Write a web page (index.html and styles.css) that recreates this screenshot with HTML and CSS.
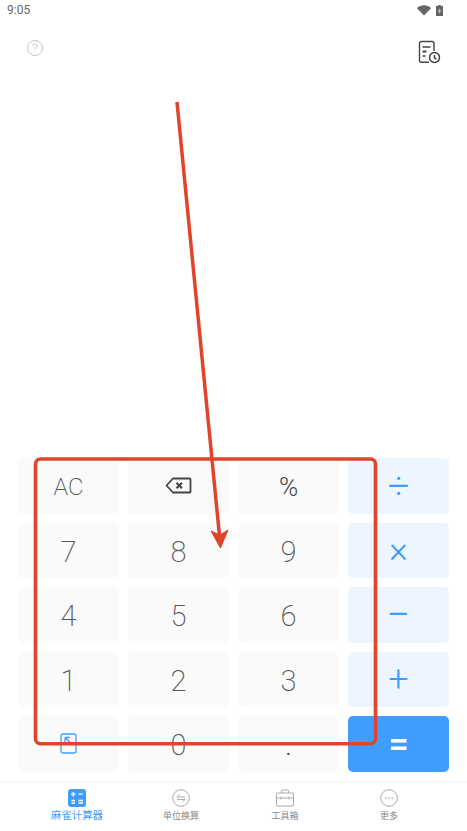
FILE: index.html
```html
<!DOCTYPE html>
<html lang="zh-CN">
<head>
    <meta charset="UTF-8">
    <meta name="viewport" content="width=device-width, initial-scale=1.0">
    <title>麻雀计算器</title>
    <link rel="stylesheet" href="styles.css">
</head>
<body>
    <div class="status-bar">
        <span class="clock">9:05</span>
        <div class="status-icons">
            <svg width="14" height="11" viewBox="0 0 14 11"><path d="M0 3.2C3.8-.6 10.2-.6 14 3.2L7 10.6z" fill="#666"/></svg>
            <svg width="7" height="11" viewBox="0 0 7 11"><path d="M2.2 0h2.6v1H7v10H0V1h2.2z" fill="#666"/><path d="M3.8 3 2 6.4h1.3L2.9 9 5 5.5H3.6z" fill="#ddd"/></svg>
        </div>
    </div>

    <header class="top-bar">
        <svg class="help-icon" width="18" height="18" viewBox="0 0 18 18" fill="none" stroke="#c4c4c4">
            <circle cx="9" cy="9" r="7.500"/>
            <path d="M6.800 7.200C6.800 5.900 7.800 5 9 5s2.200.9 2.200 2.100c0 1.600-2.200 1.700-2.200 3.500"/>
            <path d="M9 12.300v1"/>
        </svg>
        <svg class="history-icon" width="24" height="24" viewBox="0 0 24 24" fill="none" stroke="#444" stroke-width="1.400">
            <path d="M12 22.300H4.500Q2.500 22.300 2.500 20.300V3.500Q2.500 1.500 4.500 1.500H15Q17 1.500 17 3.500V11"/>
            <path d="M5.500 7h8M5.500 16h3"/>
            <path d="M5.500 11.500h4" stroke-width="2"/>
            <circle cx="17.500" cy="17.500" r="5" stroke-width="1.500"/>
            <path d="M17.500 15v3l1.800 1" stroke-width="1.500"/>
        </svg>
    </header>

    <main class="display"></main>

    <section class="keypad">
        <button class="key key-small">AC</button>
        <button class="key key-icon">
            <svg width="27" height="17" viewBox="0 0 27 17" fill="none" stroke="#444" stroke-width="1.800" stroke-linejoin="round">
                <path d="M8 1.500H24.500Q25.500 1.500 25.500 2.500V14.500Q25.500 15.500 24.500 15.500H8L1.500 8.500z"/>
                <path d="M11.500 5.800l5.500 5.500M17 5.800l-5.500 5.500" stroke-width="2"/>
            </svg>
        </button>
        <button class="key key-percent">%</button>
        <button class="key key-op key-divide">÷</button>
        <button class="key">7</button>
        <button class="key">8</button>
        <button class="key">9</button>
        <button class="key key-op key-times">×</button>
        <button class="key">4</button>
        <button class="key">5</button>
        <button class="key">6</button>
        <button class="key key-op key-minus">−</button>
        <button class="key">1</button>
        <button class="key">2</button>
        <button class="key">3</button>
        <button class="key key-op key-plus">+</button>
        <button class="key key-icon">
            <svg width="17" height="21" viewBox="0 0 17 21" fill="none" stroke="#3f9dfb" stroke-width="1.300">
                <rect x="1" y="1" width="15" height="19" rx="2"/>
                <path d="M5 4.500h5M5 4.500v5M5 4.500l6.500 6.500"/>
            </svg>
        </button>
        <button class="key">0</button>
        <button class="key key-dot">.</button>
        <button class="key key-equals">=</button>
    </section>

    <nav class="tab-bar">
        <div class="tab tab-active">
            <svg width="18" height="18" viewBox="0 0 18 18">
                <rect width="18" height="18" rx="3" fill="#3f9dfb"/>
                <path d="M3 5.200h4.500M5.200 3v4.500M10.500 5.200h4.500M3.500 11.500h3.500M3.500 14h3.500M10.500 11.500h4.500M10.500 14h4.500" stroke="#fff" stroke-width="1.300" fill="none"/>
            </svg>
            <span>麻雀计算器</span>
        </div>
        <div class="tab">
            <svg width="18" height="18" viewBox="0 0 18 18" fill="none" stroke="#aaa">
                <circle cx="9" cy="9" r="8.300"/>
                <path d="M5 8h8M5 8l2.500-2.500M13 10.500H5M13 10.500 10.500 13"/>
            </svg>
            <span>单位换算</span>
        </div>
        <div class="tab">
            <svg width="18" height="18" viewBox="0 0 18 18" fill="none" stroke="#aaa">
                <rect x=".5" y="4" width="17" height="13" rx="1"/>
                <path d="M5.500 4V2q0-1 1-1h5q1 0 1 1v2M.5 9h17M5 7.500v3M13 7.500v3"/>
            </svg>
            <span>工具箱</span>
        </div>
        <div class="tab">
            <svg width="18" height="18" viewBox="0 0 18 18" fill="none" stroke="#aaa">
                <circle cx="9" cy="9" r="8.300"/>
                <path d="M5 9h1.500M8.300 9h1.500M11.600 9h1.500" stroke-width="1.500"/>
            </svg>
            <span>更多</span>
        </div>
    </nav>

    <!-- red markup drawn over the screenshot -->
    <svg class="markup" width="467" height="831" viewBox="0 0 467 831" fill="none" stroke="#e0442a" stroke-width="3.600">
        <rect x="35.500" y="459" width="340" height="284.700" rx="5"/>
        <path d="M177 102 219.500 536" stroke-width="3.500"/>
        <path d="M211 531 220.500 548 228 530 220 535z" fill="#e0442a" stroke-width="1"/>
    </svg>
</body>
</html>
```

FILE: styles.css
```css
* {
    box-sizing: border-box;
}

body {
    display: flex;
    flex-direction: column;
    width: 467px;
    height: 831px;
    margin: 0;
    overflow: hidden;
    position: relative;
    background: #fff;
    font-family: Roboto, "Noto Sans CJK SC", sans-serif;
}

.status-bar {
    display: flex;
    align-items: center;
    justify-content: space-between;
    height: 20px;
    padding: 0 24px 0 7px;
}

.clock {
    font-size: 12px;
    color: #666;
}

.status-icons {
    display: flex;
    align-items: center;
    gap: 5px;
}

.top-bar {
    display: flex;
    align-items: flex-start;
    justify-content: space-between;
    padding: 19px 26px 0 25.500px;
}

.history-icon {
    margin-top: 1px;
}

.display {
    flex: 1;
}

.keypad {
    display: grid;
    grid-template-columns: repeat(4, 101px);
    grid-auto-rows: 55.500px;
    gap: 9px;
    padding-left: 18px;
}

.key {
    display: flex;
    align-items: center;
    justify-content: center;
    padding: 3px 0 0;
    border: none;
    border-radius: 5px;
    background: #fafafa;
    color: #555;
    font-family: inherit;
    font-size: 29px;
    font-weight: 200;
}

.key-icon {
    padding-top: 0;
}

.key-small {
    font-size: 24px;
}

.key-percent {
    font-size: 26px;
    font-weight: 300;
    color: #444;
}

.key-dot {
    padding-top: 8px;
    font-size: 20px;
    font-weight: 400;
    color: #444;
}

.key-op {
    padding-top: 0;
    background: #edf6ff;
    color: #3f9dfb;
    font-weight: 300;
}

.key-divide {
    font-size: 38px;
}

.key-times {
    font-size: 36px;
}

.key-minus {
    font-size: 42px;
}

.key-plus {
    font-size: 36px;
}

.key-equals {
    padding-top: 0;
    background: #3f9dfb;
    color: #fff;
    font-size: 36px;
    font-weight: 500;
}

.tab-bar {
    display: grid;
    grid-template-columns: repeat(4, 104px);
    height: 50px;
    margin-top: 9.500px;
    padding: 7px 0 0 25px;
    border-top: 1px solid #f6f6f6;
}

.tab {
    display: flex;
    flex-direction: column;
    align-items: center;
    gap: 3px;
    font-size: 9px;
    line-height: 12px;
    color: #888;
}

.tab-active {
    font-size: 10.400px;
    color: #3f9dfb;
}

.markup {
    position: absolute;
    top: 0;
    left: 0;
    pointer-events: none;
}
```
